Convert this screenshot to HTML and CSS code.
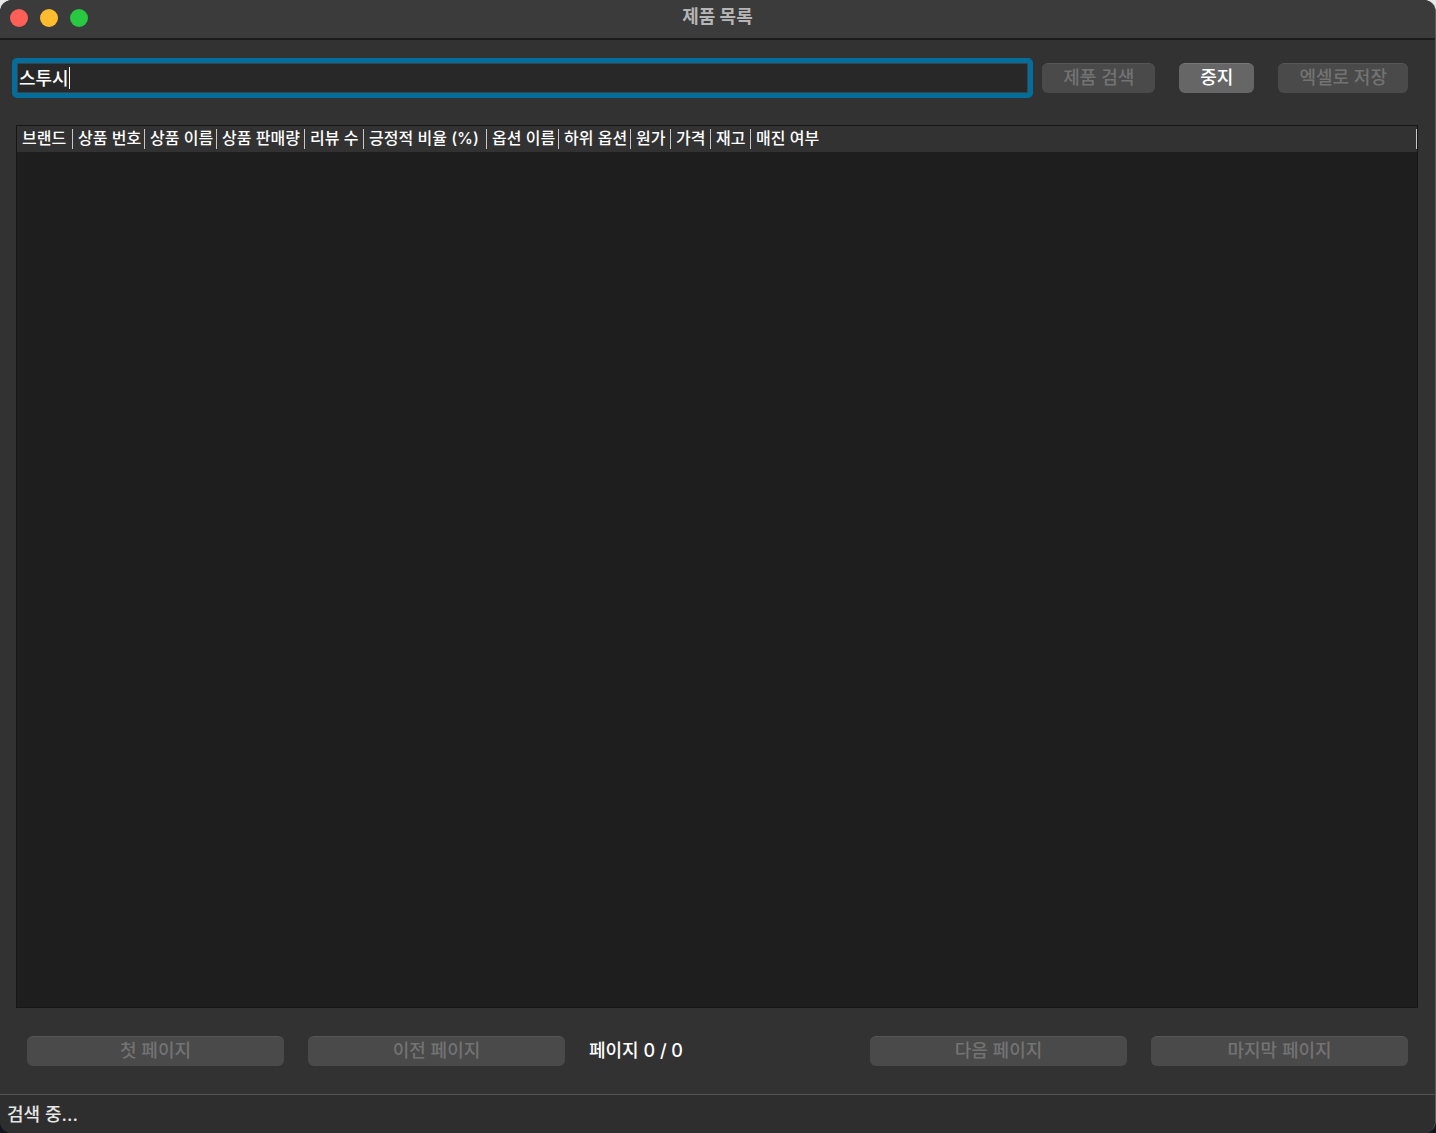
FILE: index.html
```html
<!DOCTYPE html>
<html lang="ko">
<head>
  <meta charset="UTF-8">
  <meta name="viewport" content="width=device-width, initial-scale=1.0">
  <title>제품 목록</title>
  <link rel="stylesheet" href="styles.css">
</head>
<body>

  <div class="window">
    <header class="titlebar">
      <div class="lights">
        <button class="light close" type="button" aria-label="닫기"></button>
        <button class="light minimize" type="button" aria-label="최소화"></button>
        <button class="light zoom" type="button" aria-label="확대"></button>
      </div>
      <h1>제품 목록</h1>
    </header>

    <main>
      <form class="search">
        <div class="search-field">
          <input type="text" value="스투시" aria-label="검색어">
          <span class="caret"></span>
        </div>
        <div class="search-buttons">
          <button class="btn" type="submit" disabled>제품 검색</button>
          <button class="btn" type="button">중지</button>
          <button class="btn" type="button" disabled>엑셀로 저장</button>
        </div>
      </form>

      <div class="table-wrap">
        <table>
          <colgroup>
            <col class="w-brand">
            <col class="w-medium">
            <col class="w-medium">
            <col class="w-sales">
            <col class="w-review">
            <col class="w-ratio">
            <col class="w-medium">
            <col class="w-medium">
            <col class="w-small">
            <col class="w-small">
            <col class="w-small">
            <col>
          </colgroup>
          <thead>
            <tr>
              <th>브랜드</th>
              <th>상품 번호</th>
              <th>상품 이름</th>
              <th>상품 판매량</th>
              <th>리뷰 수</th>
              <th>긍정적 비율 (%)</th>
              <th>옵션 이름</th>
              <th>하위 옵션</th>
              <th>원가</th>
              <th>가격</th>
              <th>재고</th>
              <th>매진 여부</th>
            </tr>
          </thead>
          <tbody></tbody>
        </table>
      </div>

      <nav class="pager">
        <button class="btn" type="button" disabled>첫 페이지</button>
        <button class="btn" type="button" disabled>이전 페이지</button>
        <span class="page-label">페이지 0 / 0</span>
        <button class="btn" type="button" disabled>다음 페이지</button>
        <button class="btn" type="button" disabled>마지막 페이지</button>
      </nav>
    </main>

    <footer class="statusbar">검색 중...</footer>
  </div>

</body>
</html>
```

FILE: styles.css
```css
* {
  box-sizing: border-box;
}
body {
  margin: 0;
  background: linear-gradient(#e8e8e8 50%, #14161f 50%);
  font-family: Inter, "Noto Sans CJK KR", sans-serif;
  font-size: 18px;
  font-weight: 500;
  line-height: 24px;
  color: #fff;
}
button, input {
  font: inherit;
  color: inherit;
}
.window {
  display: flex;
  flex-direction: column;
  min-height: 100vh;
  background-color: #323232;
  border-right: 1px solid #5c5c5c;
  border-radius: 12px;
  overflow: hidden;
}

/* title bar */
.titlebar {
  position: relative;
  display: flex;
  align-items: center;
  justify-content: center;
  height: 40px;
  padding-bottom: 4px;
  background-color: #3a3b3a;
  border-bottom: 2px solid #1c1c1c;
}
.titlebar h1 {
  margin: 0;
  font-size: 18px;
  font-weight: 700;
  color: #b5b5b5;
}
.lights {
  position: absolute;
  top: 9px;
  left: 10px;
  display: flex;
  gap: 12px;
}
.light {
  width: 18px;
  height: 18px;
  padding: 0;
  border: 0;
  border-radius: 50%;
}
.close {
  background-color: #ff5f57;
}
.minimize {
  background-color: #febc2e;
}
.zoom {
  background-color: #28c840;
}

main {
  flex: 1;
  display: flex;
  flex-direction: column;
}

/* search row */
.search {
  display: flex;
  align-items: center;
  gap: 9px;
  padding: 18px 27px 27px 12px;
}
.search-field {
  position: relative;
  flex: 1;
}
.search-field input {
  display: block;
  width: 100%;
  height: 40px;
  padding: 0 2px 2px;
  background-color: #282828;
  border: 5px solid #036d9b;
  border-radius: 5px;
  box-shadow: inset 0 0 0 1px #3c4246;
  outline: none;
  caret-color: transparent;
}
.caret {
  position: absolute;
  top: 9px;
  left: 57px;
  width: 1px;
  height: 22px;
  background-color: #fff;
}
.search-buttons {
  display: flex;
  gap: 24px;
}
.btn {
  height: 30px;
  padding: 0 21px 1px;
  background-color: #666;
  border: 0;
  border-top: 1px solid #777;
  border-radius: 6px;
  white-space: nowrap;
}
.btn:disabled {
  background-color: #4a4a4a;
  border-top-color: #565656;
  color: #737373;
}

/* product table */
.table-wrap {
  flex: 1;
  margin: 0 17px 0 16px;
  background-color: #1e1e1e;
  border: 1px solid #161616;
}
table {
  width: 100%;
  table-layout: fixed;
  border-collapse: collapse;
}
th {
  height: 26px;
  padding: 0 0 2px 5px;
  background: #323232 linear-gradient(#c8c8c8, #c8c8c8) no-repeat right 3px / 1px 20px;
  font-size: 16px;
  font-weight: 500;
  line-height: 24px;
  text-align: left;
  white-space: nowrap;
}
.w-brand {
  width: 56px;
}
.w-medium {
  width: 72px;
}
.w-sales {
  width: 88px;
}
.w-review {
  width: 59px;
}
.w-ratio {
  width: 123px;
}
.w-small {
  width: 40px;
}

/* paging */
.pager {
  display: grid;
  grid-template-columns: repeat(5, 1fr);
  align-items: center;
  gap: 24px;
  padding: 28px 27px;
}

.statusbar {
  height: 39px;
  padding: 8px 7px;
  background-color: #2e2e2e;
  border-top: 1px solid #555;
  color: #e6e6e6;
}
```
